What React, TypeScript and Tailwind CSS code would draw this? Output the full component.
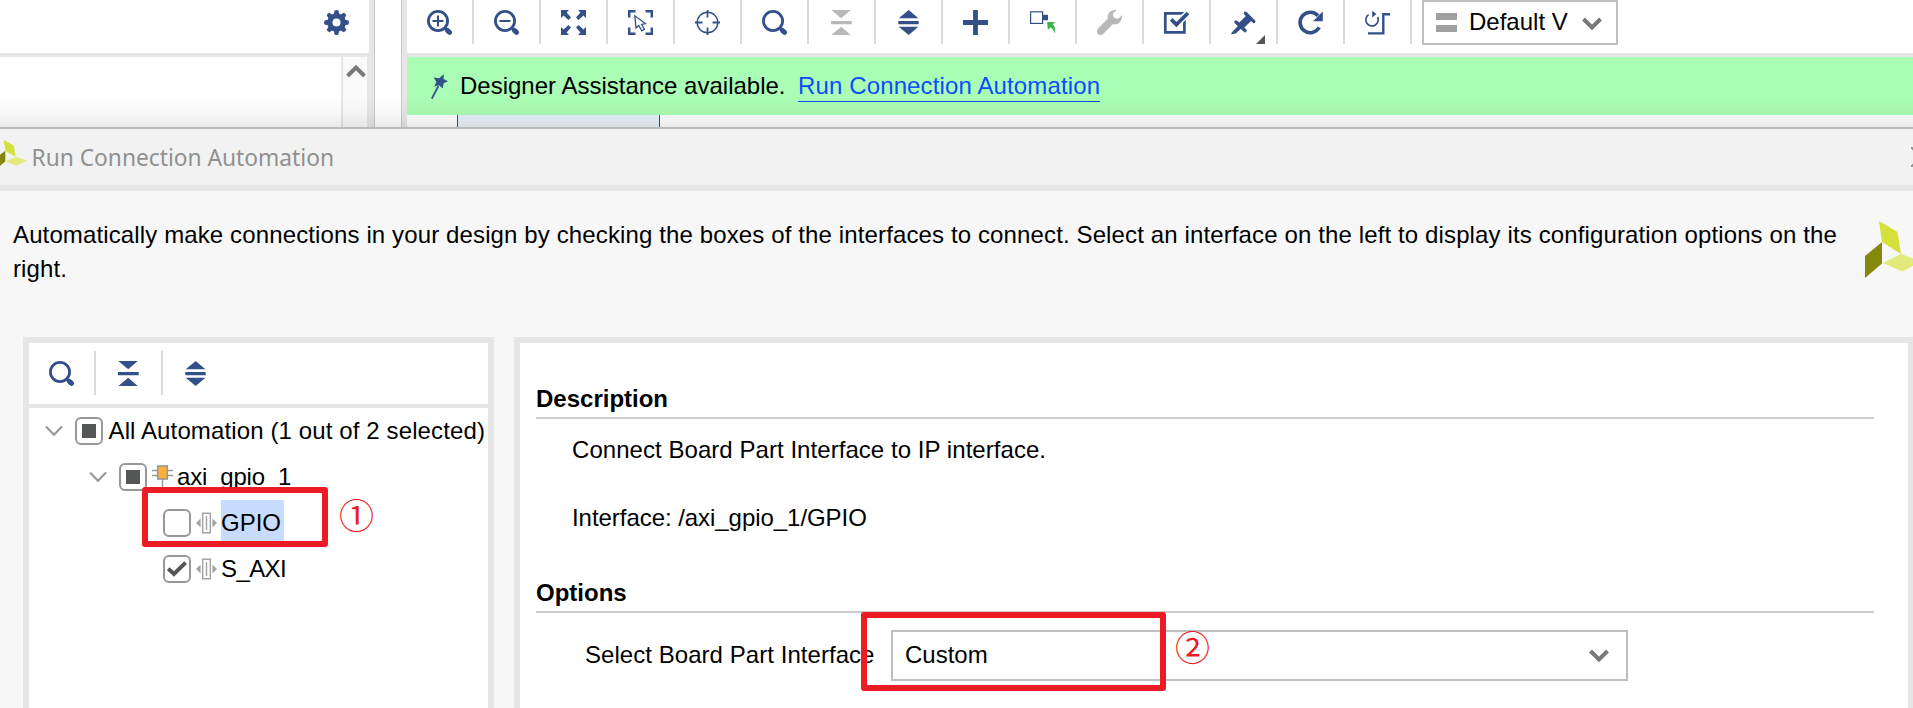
import type { ReactNode } from 'react';

const NAVY = '#335089';

function Icon({ children }: { children: ReactNode }) {
  return (
    <svg width="25" height="25" viewBox="0 0 25 25" fill="none" className="block shrink-0 overflow-visible">
      {children}
    </svg>
  );
}

function Lens({ children }: { children?: ReactNode }) {
  return (
    <Icon>
      <circle cx="11" cy="11" r="9.6" stroke={NAVY} strokeWidth="2.8" />
      <path d="M17.5 17.5 L20 20" stroke={NAVY} strokeWidth="2.5" />
      <path d="M20.3 20.3 L22.6 22.4" stroke={NAVY} strokeWidth="5" strokeLinecap="round" />
      {children}
    </Icon>
  );
}

const ZoomIn = () => (
  <Lens>
    <path d="M5.5 11 H16.5 M11 5.5 V16.5" stroke={NAVY} strokeWidth="2" />
  </Lens>
);
const ZoomOut = () => (
  <Lens>
    <path d="M5.5 11 H16.5" stroke={NAVY} strokeWidth="2" />
  </Lens>
);

const Fit = () => (
  <Icon>
    <g fill={NAVY}>
      <path d="M0 0 H8 L5.6 2.6 L10 7.4 L7.4 10 L2.6 5.6 L0 8 Z" />
      <path d="M25 0 H17 L19.4 2.6 L15 7.4 L17.6 10 L22.4 5.6 L25 8 Z" />
      <path d="M0 25 H8 L5.6 22.4 L10 17.6 L7.4 15 L2.6 19.4 L0 17 Z" />
      <path d="M25 25 H17 L19.4 22.4 L15 17.6 L17.6 15 L22.4 19.4 L25 17 Z" />
    </g>
  </Icon>
);

const SelectArea = () => (
  <Icon>
    <path d="M1.2 7.5 V1.2 H7.5 M17.5 1.2 H23.8 V7.5 M23.8 17.5 V23.8 H17.5 M7.5 23.8 H1.2 V17.5" stroke={NAVY} strokeWidth="2.5" />
    <path d="M6.8 5.8 L8 18 L10.8 15.5 L13.8 20.8 L16.4 19.3 L13.6 14.4 L17.4 13.6 Z" stroke={NAVY} strokeWidth="1.3" />
  </Icon>
);

const Crosshair = () => (
  <Icon>
    <circle cx="12.5" cy="12.5" r="10.3" stroke={NAVY} strokeWidth="1.4" />
    <path d="M12.5 0 V7.5 M12.5 17.5 V25 M0 12.5 H7.5 M17.5 12.5 H25" stroke={NAVY} strokeWidth="1.8" />
  </Icon>
);

const Collapse = ({ color = NAVY }: { color?: string }) => (
  <Icon>
    <path d="M2.3 0 H21.8 L12.2 8.2 Z M2.3 25 H21.8 L12.2 16.8 Z M2 10.9 H22.7 V14.2 H2 Z" fill={color} />
  </Icon>
);

const Expand = () => (
  <Icon>
    <path d="M2.7 8.2 H22.4 L12.7 0 Z M2.7 16.8 H22.4 L12.7 25 Z M2.3 10.9 H22.7 V14.2 H2.3 Z" fill={NAVY} />
  </Icon>
);

const Plus = () => (
  <Icon>
    <path d="M12.5 0 V25 M0 12.5 H25" stroke={NAVY} strokeWidth="4.8" />
  </Icon>
);

const Connect = () => (
  <Icon>
    <rect x="0.6" y="1.8" width="12" height="11.6" stroke={NAVY} strokeWidth="1.2" />
    <path d="M12.6 4.8 H18 V10.2 H12.6 Z" fill={NAVY} />
    <path d="M17.2 12 H25 L22.7 14.4 C25.8 16.8 25.6 20 24.4 23.4 C23.8 20.6 22.8 18.8 20.4 17.3 L17.8 20 Z" fill="#3cb44b" />
  </Icon>
);

const Wrench = () => (
  <Icon>
    <path
      d="M19.8 0.4 C14.6 -1 9.8 3 10.8 8.8 L1 18.4 C-0.6 20.4 -0.4 22.8 1.2 24.2 C2.8 25.4 5 25.2 6.6 23.6 L15.8 14.2 C21.4 15.2 25.8 10.4 24.9 4.9 C22.9 7.6 21.4 9.3 19 8.6 C16.4 7.8 15.2 6 16.2 3.6 C16.9 2 18.2 1.2 19.8 0.4 Z"
      fill="#b8b8b8"
    />
  </Icon>
);

const Validate = () => (
  <Icon>
    <path d="M1.3 3.4 H20.4 V22.4 H1.3 Z" stroke={NAVY} strokeWidth="2.7" />
    <path d="M7.2 9.4 L12.4 14.6 L24.4 2.4" stroke="#ffffff" strokeWidth="6.5" />
    <path d="M7.2 9.4 L12.4 14.6 L24 3" stroke={NAVY} strokeWidth="3.8" />
  </Icon>
);

const Pin = () => (
  <Icon>
    <path d="M14.4 3.2 L22.8 11.4 M5 12 L14 20.6" stroke={NAVY} strokeWidth="3.4" strokeLinecap="round" />
    <path d="M18.6 7.4 L9.6 16.2" stroke={NAVY} strokeWidth="7.2" />
    <path d="M7.8 15 L10.8 18 L4.8 23.4 L0 24.2 L0.8 22.6 Z" fill={NAVY} />
  </Icon>
);

const Refresh = () => (
  <Icon>
    <path d="M21.2 17.4 A10.2 10.2 0 1 1 20 5.8" stroke={NAVY} strokeWidth="3.6" />
    <path d="M24.8 1.6 V11.2 H15 Z" fill={NAVY} />
  </Icon>
);

const Regenerate = () => (
  <Icon>
    <path d="M3.6 4.6 A6.2 6.2 0 1 0 12.6 7" stroke={NAVY} strokeWidth="1.7" />
    <path d="M7.2 0.8 L11.4 4 L7.2 7.6 Z" fill={NAVY} />
    <path d="M25 4.2 H18.3 V23.4 H3" stroke={NAVY} strokeWidth="2.4" />
  </Icon>
);

const Gear = () => (
  <Icon>
    {[0, 45, 90, 135].map((a) => (
      <path key={a} d="M10.6 0.6 Q12.5 -0.6 14.4 0.6 L15.4 5 V20 L14.4 24.4 Q12.5 25.6 10.6 24.4 L9.6 20 V5 Z" fill={NAVY} transform={`rotate(${a} 12.5 12.5)`} />
    ))}
    <circle cx="12.5" cy="12.5" r="9.3" fill={NAVY} />
    <circle cx="12.5" cy="12.5" r="4" fill="#ffffff" />
  </Icon>
);

const Chevron = () => (
  <svg width="20" height="14" viewBox="0 0 20 14" fill="none" className="block">
    <path d="M1.5 2 L10 10.5 L18.5 2" stroke="#797979" strokeWidth="4" />
  </svg>
);

function Cell({ children, last, corner }: { children: ReactNode; last?: boolean; corner?: boolean }) {
  return (
    <div className={`relative flex h-11 w-[67px] shrink-0 items-start pt-[10px] pl-5 ${last ? '' : 'border-r-2 border-[#dadada]'}`}>
      {children}
      {corner && (
        <svg width="9" height="9" viewBox="0 0 9 9" className="absolute right-[11px] bottom-0">
          <path d="M9 0 V9 H0 Z" fill="#555555" />
        </svg>
      )}
    </div>
  );
}

function Check({ state }: { state: 'off' | 'on' | 'mixed' }) {
  return (
    <div className="flex size-7 shrink-0 items-center justify-center rounded-[6px] border-2 border-[#979797] bg-white">
      {state === 'mixed' && <div className="size-[14px] bg-[#555756]" />}
      {state === 'on' && (
        <svg width="20" height="16" viewBox="0 0 20 16" fill="none">
          <path d="M1.2 7.6 L7 13 L18.6 1.6" stroke="#555756" strokeWidth="4" />
        </svg>
      )}
    </div>
  );
}

const TreeArrow = () => (
  <svg width="18" height="12" viewBox="0 0 18 12" fill="none" className="mr-3 block shrink-0">
    <path d="M1 1.5 L9 9.8 L17 1.5" stroke="#979797" strokeWidth="2.1" />
  </svg>
);

const Port = () => (
  <svg width="21" height="22" viewBox="0 0 21 22" fill="none" className="mr-1 ml-[5px] block shrink-0">
    <path d="M6.7 1.2 H14.3 V20.8 H6.7 Z" stroke="#a3a3a3" strokeWidth="1.4" />
    <path d="M10.5 4 V18" stroke="#a3a3a3" strokeWidth="1.4" />
    <path d="M0 11 L4.6 6.6 V15.4 Z M21 11 L16.4 6.6 V15.4 Z" fill="#a3a3a3" />
  </svg>
);

const Block = () => (
  <svg width="21" height="22" viewBox="0 0 21 22" fill="none" className="relative -top-px mr-1 ml-[5px] block shrink-0">
    <path d="M0 5.5 H21 M0 10.5 H21 M10.5 14 V22" stroke="#979797" strokeWidth="1.4" />
    <rect x="5.7" y="1" width="9.6" height="13" fill="#fbb034" stroke="#979797" strokeWidth="1.6" />
  </svg>
);

const Logo = ({ className }: { className: string }) => (
  <svg viewBox="0 0 52 57" preserveAspectRatio="none" className={className}>
    <path d="M14 0 L32.5 11 L36 33 L17 21 Z" fill="#d5e03a" />
    <path d="M0 35 L17 21 V42.5 L0 57 Z" fill="#85880b" />
    <path d="M17.5 42 L36 33 L56 40.5 L37.5 50.5 Z" fill="#e3ea7c" />
  </svg>
);

export default function App() {
  return (
    <div className="relative flex h-[708px] w-[1913px] flex-col overflow-hidden bg-white font-['Liberation_Sans',Arial,sans-serif] text-2xl whitespace-nowrap text-black">
      <div className="relative flex h-[127px] shrink-0">
        <div className="flex w-[369px] flex-col">
          <div className="flex h-[53px] shrink-0 items-start justify-end bg-white pt-[10px] pr-5">
            <Gear />
          </div>
          <div className="h-1 shrink-0 bg-[#e6e6e6]" />
          <div className="flex flex-1 justify-end">
            <div className="flex w-7 border-x-2 border-[#e6e6e6] bg-[#fafafa] pt-[7px] pl-[3px]">
              <svg width="20" height="14" viewBox="0 0 20 14" fill="none" className="block shrink-0">
                <path d="M1.5 12 L10 3.5 L18.5 12" stroke="#797979" strokeWidth="4" />
              </svg>
            </div>
          </div>
        </div>
        <div className="w-1.5 border-r border-[#c8c8c8] bg-[#e6e6e6]" />
        <div className="w-[26px] bg-white" />
        <div className="w-1.5 border-l border-[#c8c8c8] bg-[#e6e6e6]" />
        <div className="flex flex-1 flex-col">
          <div className="flex h-[53px] shrink-0">
            <Cell><ZoomIn /></Cell>
            <Cell><ZoomOut /></Cell>
            <Cell><Fit /></Cell>
            <Cell><SelectArea /></Cell>
            <Cell><Crosshair /></Cell>
            <Cell><Lens /></Cell>
            <Cell><Collapse color="#b8b8b8" /></Cell>
            <Cell><Expand /></Cell>
            <Cell><Plus /></Cell>
            <Cell><Connect /></Cell>
            <Cell><Wrench /></Cell>
            <Cell><Validate /></Cell>
            <Cell corner><Pin /></Cell>
            <Cell><Refresh /></Cell>
            <Cell><Regenerate /></Cell>
            <div className="ml-[10px] flex h-[45px] w-[196px] items-center border-2 border-[#bfbfbf] bg-white pl-3">
              <div className="flex w-[21px] flex-col gap-[5px]">
                <div className="h-[7px] bg-[#a0a0a0]" />
                <div className="h-[7px] bg-[#a0a0a0]" />
              </div>
              <span className="ml-[12px] w-[99px] shrink-0 pb-0.5">Default V</span>
              <div className="ml-[14px] shrink-0 pt-0.5"><Chevron /></div>
            </div>
          </div>
          <div className="h-1 shrink-0 bg-[#e6e6e6]" />
          <div className="flex h-[58px] shrink-0 items-center bg-[#aafdb4] pl-6">
            <svg width="17" height="25" viewBox="0 0 17 25" fill="none" className="mr-[12px] block shrink-0">
              <path d="M0.8 24.6 L7.4 12" stroke={NAVY} strokeWidth="1.8" />
              <path d="M12.8 0 L12.6 5 L17 7.2 L12.6 9.2 L11.8 14.4 L8 11.2 L3.2 12.6 L5.4 8 L2.6 3.4 L8.2 4.2 Z" fill={NAVY} />
            </svg>
            <span className="w-[338px]">Designer Assistance available.</span>
            <span className="h-[31px] border-b border-[#0d4cff] leading-[29px] tracking-[0.13px] text-[#0d4cff]">Run Connection Automation</span>
          </div>
          <div className="flex flex-1 bg-white pl-[50px]">
            <div className="w-[203px] border-x border-[#335089] bg-[#e8f1fa]" />
          </div>
        </div>
        <div className="absolute inset-x-0 bottom-0 h-8 bg-linear-to-b from-transparent via-black/2 to-black/8" />
      </div>

      <div className="flex flex-1 flex-col border-t-2 border-[#b9bbb9] bg-[#f7f7f7]">
        <div className="flex h-14 shrink-0 items-center bg-[#f2f2f2]">
          <Logo className="-mt-1.5 -ml-1 h-[29px] w-[28.5px] shrink-0 overflow-visible" />
          <span className="ml-[7px] pt-0.5 font-['Noto_Sans','Open_Sans',sans-serif] text-[22.75px] text-[#909090]">Run Connection Automation</span>
          <svg width="20" height="20" viewBox="0 0 20 20" className="-mr-[18px] ml-auto shrink-0">
            <path d="M0 0 L20 20 M20 0 L0 20" stroke="#909090" strokeWidth="2" />
          </svg>
        </div>
        <div className="h-1.5 shrink-0 bg-[#e6e6e6]" />
        <div className="flex h-[146px] shrink-0 items-start pt-[27px] pl-[13px]">
          <p className="w-[1852px] shrink-0 leading-[34px] tracking-[0.125px] whitespace-normal">
            Automatically make connections in your design by checking the boxes of the interfaces to connect. Select an interface on the left to display its configuration options on the right.
          </p>
          <Logo className="mt-[3px] h-[57px] w-[52px] shrink-0" />
        </div>

        <div className="flex flex-1">
          <div className="ml-[23px] flex w-[471px] flex-col border-x-[6px] border-t-[6px] border-[#e6e6e6] bg-white">
            <div className="flex h-[61px] shrink-0 pt-2">
              <Cell><Lens /></Cell>
              <Cell><Collapse /></Cell>
              <Cell last><Expand /></Cell>
            </div>
            <div className="h-1 shrink-0 bg-[#e6e6e6]" />
            <div className="flex h-[46px] items-center pl-4">
              <TreeArrow />
              <Check state="mixed" />
              <span className="ml-[5.5px] tracking-[0.12px]">All Automation (1 out of 2 selected)</span>
            </div>
            <div className="flex h-[46px] items-center pl-[60px]">
              <TreeArrow />
              <Check state="mixed" />
              <Block />
              <span className="tracking-[-0.2px]">axi_gpio_1</span>
            </div>
            <div className="flex h-[46px] items-center pl-[134px]">
              <Check state="off" />
              <Port />
              <span className="w-[63px] bg-[#c8dcff] leading-[46px]">GPIO</span>
            </div>
            <div className="flex h-[46px] items-center pl-[134px]">
              <Check state="on" />
              <Port />
              <span className="tracking-[-0.6px]">S_AXI</span>
            </div>
          </div>

          <div className="ml-5 flex flex-1 flex-col border-t-[6px] border-r-[5px] border-l-[6px] border-[#e6e6e6] bg-white pt-[38px] pr-[34px] pl-4">
            <h2 className="h-[38px] border-b-2 border-[#cdcdcd] leading-[35px] font-bold">Description</h2>
            <div className="mt-[14px] pl-9 leading-[34px]">
              <p className="tracking-[0.05px]">Connect Board Part Interface to IP interface.</p>
              <p className="mt-[34px] tracking-[-0.05px]">Interface: /axi_gpio_1/GPIO</p>
            </div>
            <h2 className="mt-10 h-[38px] border-b-2 border-[#cdcdcd] leading-[35px] font-bold">Options</h2>
            <div className="mt-[17px] flex h-[51px] items-center pl-[49px]">
              <span className="w-[306px] pb-0.5 tracking-[0.05px]">Select Board Part Interface</span>
              <div className="flex h-[51px] w-[737px] items-center justify-between border-2 border-[#bfbfbf] bg-white pr-[17px] pl-3">
                <span className="pb-0.5">Custom</span>
                <Chevron />
              </div>
            </div>
          </div>
        </div>
      </div>

      <div className="absolute top-[487px] left-[142px] h-[60px] w-[186px] rounded-[3px] border-[6px] border-[#ed1c24]" />
      <div className="absolute top-[612px] left-[861px] h-[79px] w-[305px] rounded-[3px] border-[6px] border-[#ed1c24]" />
      <span className="absolute top-[492px] left-[339px] font-['Noto_Sans_CJK_SC',sans-serif] text-[35px] leading-[44px] text-[#ed1c24]">①</span>
      <span className="absolute top-[624px] left-[1175px] font-['Noto_Sans_CJK_SC',sans-serif] text-[35px] leading-[44px] text-[#ed1c24]">②</span>
    </div>
  );
}
